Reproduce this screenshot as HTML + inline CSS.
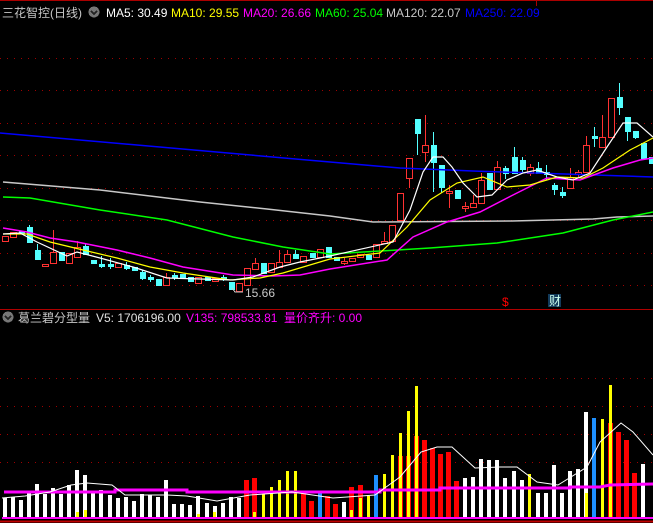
<!DOCTYPE html>
<html><head><meta charset="utf-8"><style>
html,body{margin:0;padding:0;background:#000;overflow:hidden;width:653px;height:523px}
svg{display:block}
text{font-family:"Liberation Sans","Noto Sans CJK SC",sans-serif;font-size:12px}
</style></head><body>
<svg id="s" width="653" height="523" viewBox="0 0 653 523" xmlns="http://www.w3.org/2000/svg" shape-rendering="crispEdges">
<rect width="653" height="523" fill="#000"/>
<line x1="0" y1="0.5" x2="653" y2="0.5" stroke="#a00" />
<line x1="536.5" y1="0" x2="536.5" y2="6" stroke="#a00"/>
<g id="grid"></g>
<line x1="0" y1="309.5" x2="653" y2="309.5" stroke="#b00000"/>
<line x1="0" y1="521.5" x2="653" y2="521.5" stroke="#c00000" stroke-width="2"/>
<g id="vol"></g>
<g id="cand"></g>
<g id="ma" fill="none" shape-rendering="auto"></g>
<text x="2" y="17" fill="#c8c8c8" font-size="13">三花智控(日线)</text>
<circle cx="94" cy="12" r="5.5" fill="#777"/><path d="M91 11 l3 3 l3 -3" stroke="#222" stroke-width="1.5" fill="none"/>
<text x="106" y="17" fill="#fff">MA5: 30.49</text>
<text x="171" y="17" fill="#ff0">MA10: 29.55</text>
<text x="243" y="17" fill="#f0f">MA20: 26.66</text>
<text x="315" y="17" fill="#0f0">MA60: 25.04</text>
<text x="386" y="17" fill="#c8c8c8">MA120: 22.07</text>
<text x="465" y="17" fill="#0000ff">MA250: 22.09</text>
<circle cx="8" cy="317" r="5.5" fill="#777"/><path d="M5 316 l3 3 l3 -3" stroke="#222" stroke-width="1.5" fill="none"/>
<text x="18" y="322" fill="#c8c8c8" font-size="13">葛兰碧分型量</text>
<text x="96" y="322" fill="#e0e0e0">V5: 1706196.00</text>
<text x="186" y="322" fill="#f0f">V135: 798533.81</text>
<text x="284" y="322" fill="#f0f">量价齐升: 0.00</text>
<text x="245" y="297" fill="#c8c8c8">15.66</text>
<path d="M232 288 l3 4 l8 0" stroke="#c8c8c8" fill="none"/>
<text x="502" y="306" fill="#f00" font-size="13">$</text>
<rect x="548" y="294" width="13" height="13" fill="#123a5a"/>
<text x="549" y="305" fill="#cfe" font-size="11">财</text>
</svg>
<script>
var NS="http://www.w3.org/2000/svg";
function el(p,t,a){var e=document.createElementNS(NS,t);for(var k in a)e.setAttribute(k,a[k]);document.getElementById(p).appendChild(e);return e;}
[58,90,123,155,188,220,253,285,378,406,434,462].forEach(function(y){el("grid","line",{x1:0,x2:653,y1:y+.5,y2:y+.5,stroke:"#a00000","stroke-dasharray":"1 6"});});
var X=function(i){return 4.5+8.08*i;};
var C=[["r",236,241],["r",232,237],["c",231,233],["c",227,242,225],["c",250,259,244],["r",264,266],["r",252,263,230],["c",252,260],["r",253,263],["r",247,257,241],
["c",246,254,243],["c",260,263],["c",264,266,256,268],["c",264,266,258,269],["r",263,267],["c",265,268,262,270],["c",267,270],["c",272,278,270,280],["c",277,279,275,282],["c",279,285],
["r",277,285,273],["c",275,277,273,280],["c",274,277],["c",277,281],["r",277,283],["c",277,280],["r",278,281],["c",277,279,275,281],["c",282,289],["r",283,291],
["r",268,285],["r",263,269,258],["c",263,273],["r",263,272],["r",262,267,250],["r",254,262,250],["c",254,258,250],["r",256,262],["c",253,257],["r",249,257],
["c",247,257],["c",257,260],["r",261,263,258,265],["r",258,261],["r",254,257],["c",255,259],["r",244,257],["r",241,243,232],["r",225,241],["r",193,220],
["r",158,178,158,188],["c",119,133,119,155],["r",145,152,115,162],["c",145,162,132,192],["c",165,187,165,193],["r",191,193,185,208],["c",190,198],["r",206,208,202,212],["r",203,207,195],["r",180,203,173],
["c",173,189],["r",167,189,161],["c",168,173,166,179],["c",157,173,147],["c",160,169,157,173],["r",167,173,164,176],["c",168,173,162],["c",172,174,165,180],["c",185,189,183,195],["c",192,195,187,198],
["r",177,188,168],["r",172,174,170,177],["r",145,172,136],["c",136,138,127,147],["r",137,147,115],["r",98,137],["c",97,107,83,115],["c",117,131,117,141],["c",131,137,131,139],["c",143,158],["c",157,163]];
C.forEach(function(c,i){var x=Math.round(X(i)),col=c[0]=="r"?"#ff3232":"#54ffff";
 var t=c[3]||c[1],b=c[4]||c[2];
 el("cand","line",{x1:x+.5,x2:x+.5,y1:t,y2:b,stroke:col});
 var h=Math.max(1,c[2]-c[1]);
 if(c[0]=="r") el("cand","rect",{x:x-2.5,y:c[1]+.5,width:6,height:h,fill:"#000",stroke:col});
 else el("cand","rect",{x:x-2,y:c[1],width:6,height:h+1,fill:col});
});
var V=[498,497,500,493,484,494,488,494,485,470,475,492,490,495,498,497,501,494,495,497,480,504,504,505,496,503,506,503,497,498,
"r480","r478","y494","y488","y480","y471","y471","r492","r501","b493","r496","r504",502,"r487","r485","y496","b475","y474","y455","r456",
"r456","r436","r440","r448","r454","r452","r481",478,477,459,460,460,478,471,480,"y474",493,493,465,493,471,469,412,"b418","y419","r423","r432","r440","r473",464];
var cols={r:"#ff0000",y:"#ffff00",b:"#1e90ff",w:"#ffffff"};
V.forEach(function(v,i){var c="w",y=v;if(typeof v=="string"){c=v[0];y=+v.slice(1);}
 var w=c=="y"?3:(c=="r"?5:4); var x=Math.round(X(i)-w/2);
 el("vol","rect",{x:x,y:y,width:w,height:518-y,fill:cols[c]});});
[[49,433],[50,411],[51,386],[75,385],[74,419],[48,455],[9,512],[10,510],[24,514],[26,512],[31,512],[33,487],[35,488],[36,499],[43,510],[44,498],[65,500],[72,493]].forEach(function(p){
 el("vol","rect",{x:Math.round(X(p[0])-1.5),y:p[1],width:3,height:518-p[1],fill:"#ff0"});});
el("vol","line",{x1:2,x2:653,y1:518,y2:518,stroke:"#ff00ff","stroke-width":2});
function pl(pts,col,w){el("ma","polyline",{points:pts,stroke:col,"stroke-width":w||1});}
pl("4,492 115,492 115,490 187,490 187,492 380,492 380,490 440,490 440,488 570,488 570,487 600,487 610,485 653,484","#ff00ff",3);
pl("2,498 25,496 50,492 71,485 87,483 112,485 125,495 167,495 187,496 217,501 250,495 292,492 333,498 375,495 400,477 421,452 437,447 452,447 475,468 500,467 517,467 537,482 558,485 587,467 600,442 621,423 633,432 653,455","#fff");
pl("0,133 330,162 400,168 473,171 653,177","#0000ff",1.5);
pl("3,182 100,190 200,202 267,209 330,216 373,222 512,221 593,219 617,217 653,216","#c8c8c8",1.5);
pl("3,197 30,198 100,210 167,220 233,237 283,247 330,254 430,248 497,243 563,233 613,220 653,212","#00ff00",1.5);
pl("3,228 27,232 50,238 77,242 117,250 150,258 183,267 233,275 273,276 300,275 330,269 387,260 413,237 447,222 480,212 513,195 547,178 580,180 613,168 640,160 653,158","#ff00ff",1.5);
pl("3,234 27,234 50,242 83,250 117,258 150,267 183,273 230,280 260,278 283,273 330,259 380,253 407,227 430,200 457,183 483,177 507,187 530,185 557,177 583,178 603,168 630,150 653,138","#ffff00",1.2);
pl("3,234 20,233 37,242 67,256 77,252 100,258 133,267 167,278 200,279 233,280 253,277 280,267 300,262 330,256 393,242 410,210 423,172 433,157 443,157 452,167 463,183 477,197 492,195 507,180 523,173 537,170 557,177 573,180 590,173 607,147 623,123 637,123 653,137","#ffffff",1.2);
</script>
</body></html>
